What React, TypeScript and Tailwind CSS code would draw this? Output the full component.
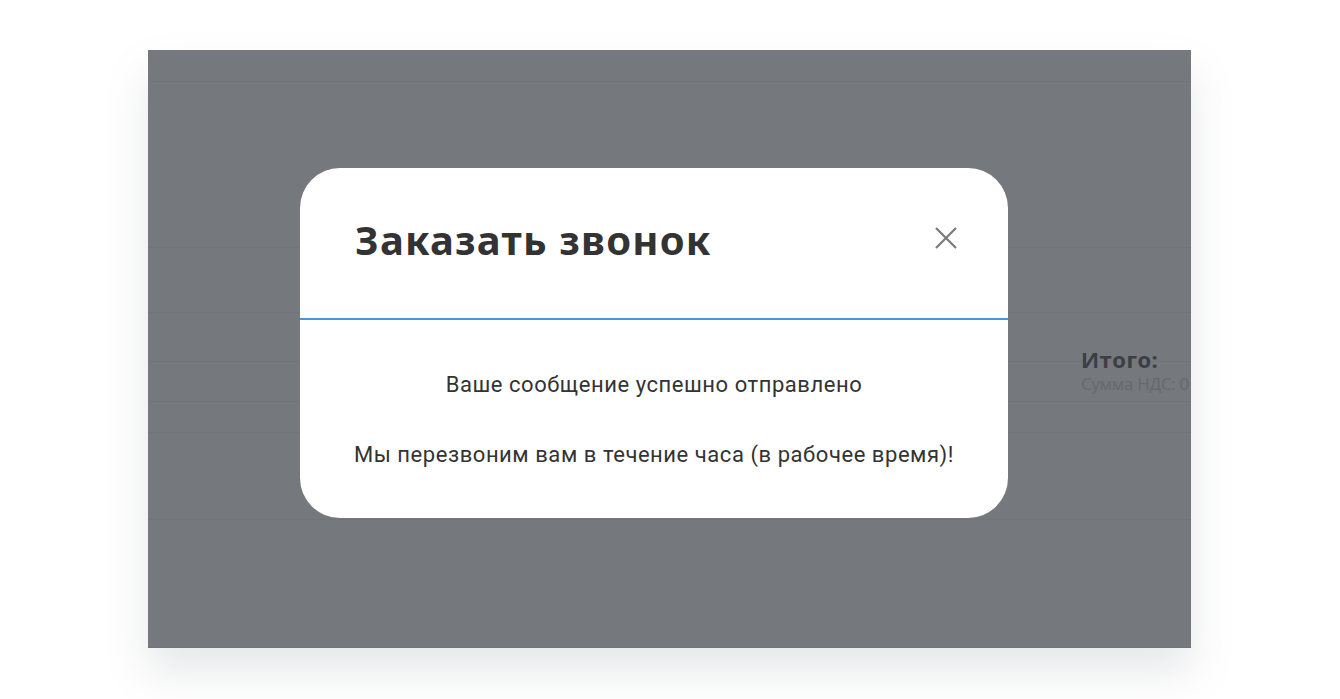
import React from "react";

export default function App() {
  const rows = [32, 166, 65, 49, 40, 31, 87, 128];
  return (
    <div className="w-[1340px] h-[699px] bg-white overflow-hidden pt-[50px] pl-[148px]">
      <div className="relative w-[1043px] h-[598px] bg-[#75787d] shadow-[0_24px_40px_rgba(120,125,140,0.18)]">
        <div className="flex flex-col">
          {rows.map((h, i) => (
            <div
              key={i}
              className="border-b border-[#717479]"
              style={{ height: h }}
            />
          ))}
        </div>
        <div className="absolute left-[933px] top-[295px] font-['Open_Sans',sans-serif]">
          <div className="text-[22px] font-bold text-[#3b3e44] leading-[28px] tracking-[0.5px]">Итого:</div>
          <div className="text-[17px] text-[#65686d] leading-[22px] whitespace-nowrap w-[110px] overflow-hidden tracking-[-0.3px]">
            Сумма НДС: 0
          </div>
        </div>
        <div className="absolute left-[152px] top-[118px] w-[708px] h-[350px] bg-white rounded-[40px] overflow-hidden flex flex-col">
          <div className="h-[152px] shrink-0 flex items-start justify-between pl-[55px] pr-[50px] pt-[48px] border-b-2 border-[#4a94dc]">
            <h1 className="font-['Noto_Sans',sans-serif] font-bold text-[40px] leading-[48px] text-[#333333] tracking-[1.2px]">
              Заказать звонок
            </h1>
            <svg width="24" height="24" viewBox="0 0 24 24" className="mt-[10px]">
              <path d="M2 2 L22 22 M22 2 L2 22" stroke="#7a7a7a" strokeWidth="2.2" />
            </svg>
          </div>
          <div className="flex flex-col items-center pt-[51px] font-['Roboto',sans-serif] text-[#333333] text-[22px] leading-[28px] tracking-[0.55px]">
            <p>Ваше сообщение успешно отправлено</p>
            <p className="mt-[42px]">Мы перезвоним вам в течение часа (в рабочее время)!</p>
          </div>
        </div>
      </div>
    </div>
  );
}
